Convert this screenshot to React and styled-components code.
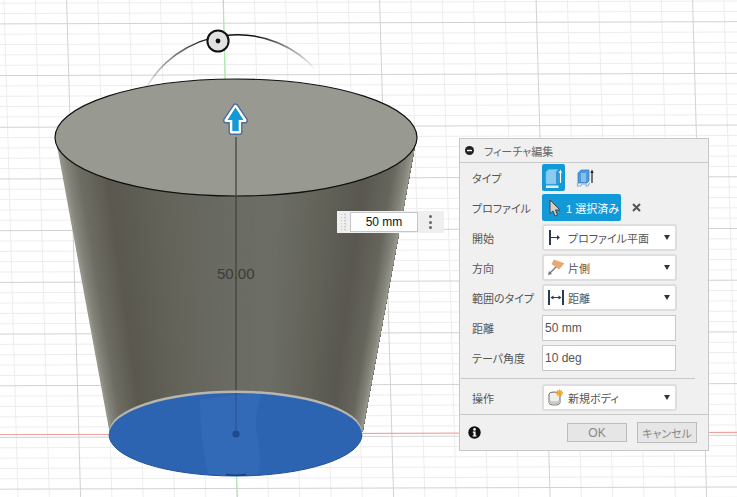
import React from "react";
import styled, { createGlobalStyle } from "styled-components";

const Global = createGlobalStyle`
  html, body { margin: 0; padding: 0; background: #fff; overflow: hidden; }
  body { font-family: "Liberation Sans", "Noto Sans CJK JP", sans-serif; }
`;

const Canvas = styled.div`
  position: relative;
  width: 737px;
  height: 497px;
  overflow: hidden;
  background: #fff;
`;

const Scene = styled.svg`
  position: absolute;
  inset: 0;
  display: block;
`;

const DimLabel = styled.span`
  position: absolute;
  left: 217px;
  top: 265px;
  font-size: 15px;
  line-height: 18px;
  color: #3c3c38;
`;

const MiniBar = styled.div`
  position: absolute;
  left: 337px;
  top: 211px;
  width: 107px;
  height: 22px;
  box-sizing: border-box;
  display: flex;
  align-items: center;
  background: #efefef;
`;

const Grip = styled.div`
  width: 5px;
  height: 18px;
  margin: 0 4px 0 3px;
  background-image: radial-gradient(#c4c4c4 0.7px, transparent 0.8px);
  background-size: 3px 3px;
  border-right: 1px solid #dcdcdc;
`;

const MiniInput = styled.div`
  width: 68px;
  height: 20px;
  box-sizing: border-box;
  border: 1px solid #c6c6c6;
  background: #fff;
  display: flex;
  align-items: center;
  justify-content: center;
  font-size: 12px;
  color: #111;
`;

const MiniDots = styled.div`
  margin-left: 11px;
  display: flex;
  flex-direction: column;
  gap: 2.5px;
`;

const MiniDot = styled.i`
  display: block;
  width: 3px;
  height: 3px;
  border-radius: 50%;
  background: #666;
`;

const Panel = styled.section`
  position: absolute;
  left: 459px;
  top: 138px;
  width: 250px;
  height: 313px;
  box-sizing: border-box;
  border: 1px solid #c8c8c8;
  background: #f0f0f0;
  display: flex;
  flex-direction: column;
  font-family: "Liberation Sans", "Noto Sans CJK JP", sans-serif;
  font-feature-settings: "palt";
  font-size: 11px;
  color: #555;
`;

const Header = styled.header`
  height: 24px;
  box-sizing: border-box;
  flex: none;
  display: flex;
  align-items: center;
  gap: 10px;
  padding-left: 5px;
  border-bottom: 1px solid #c8c8c8;
`;

const Title = styled.h1`
  margin: 0;
  font-size: 11px;
  font-weight: 400;
  color: #666;
`;

const Body = styled.div`
  flex: 1;
  display: flex;
  flex-direction: column;
  padding: 1px 0 0 12px;
`;

const Row = styled.div`
  display: grid;
  grid-template-columns: 70px 1fr;
  align-items: center;
  height: 27px;
  margin-bottom: 3px;
`;

const Label = styled.label`
  color: #555;
  white-space: nowrap;
`;

const Controls = styled.div`
  display: flex;
  align-items: center;
  height: 27px;
`;

const TypeButton = styled.button`
  width: 23px;
  height: 27px;
  padding: 0;
  margin-right: ${(p) => (p.$active ? "8px" : "0")};
  border: none;
  border-radius: 2px;
  background: ${(p) => (p.$active ? "#129ad8" : "transparent")};
  display: flex;
  align-items: center;
  justify-content: center;
`;

const SelectionButton = styled.button`
  width: 79px;
  height: 27px;
  padding: 0 0 0 7px;
  border: none;
  border-radius: 2px;
  background: #129ad8;
  color: #fff;
  font: inherit;
  font-feature-settings: "palt";
  display: flex;
  align-items: center;
  gap: 5px;
  white-space: nowrap;
`;

const ClearButton = styled.button`
  width: 11px;
  height: 11px;
  margin-left: 10px;
  padding: 0;
  border: none;
  background: none;
  display: flex;
`;

const Select = styled.div`
  width: 135px;
  height: 27px;
  box-sizing: border-box;
  border: 2px solid #dedede;
  border-radius: 3px;
  background: #fff;
  display: flex;
  align-items: center;
  padding: 0 5px 0 ${(p) => p.$pad || 1}px;
  color: #555;
`;

const SelectIcon = styled.span`
  width: 21px;
  flex: none;
  display: flex;
  align-items: center;
`;

const SelectText = styled.span`
  flex: 1;
  white-space: nowrap;
`;

const Caret = styled.i`
  width: 0;
  height: 0;
  border-left: 3px solid transparent;
  border-right: 3px solid transparent;
  border-top: 5px solid #333;
`;

const TextInput = styled.div`
  width: 134px;
  height: 26px;
  margin-top: 1px;
  box-sizing: border-box;
  border: 1px solid #c8c8c8;
  background: #fff;
  padding-left: 2px;
  display: flex;
  align-items: center;
  font-size: 12px;
  color: #555;
`;

const Separator = styled.hr`
  width: 234px;
  height: 1px;
  margin: 4px 0 5px -11px;
  border: none;
  background: #c8c8c8;
`;

const Footer = styled.footer`
  height: 36px;
  box-sizing: border-box;
  flex: none;
  border-top: 1px solid #c8c8c8;
  display: flex;
  align-items: center;
  padding: 0 11px 0 8px;
`;

const InfoIcon = styled.svg`
  width: 13px;
  height: 13px;
  margin-right: auto;
`;

const FootButton = styled.button`
  width: 60px;
  height: ${(p) => (p.$tall ? 21 : 19)}px;
  margin-left: 10px;
  padding: 0;
  box-sizing: border-box;
  border: 1px solid #bdbdbd;
  background: #e6e6e6;
  color: #888;
  font: inherit;
  font-feature-settings: "palt";
  font-size: ${(p) => (p.$tall ? 11 : 12)}px;
`;

/* ---------- scene drawing ---------- */

const hexLerp = (a, b, t) => {
  const p = (h) => [1, 3, 5].map((i) => parseInt(h.slice(i, i + 2), 16));
  const [x, y] = [p(a), p(b)];
  return `rgb(${x.map((v, i) => Math.round(v + (y[i] - v) * t)).join(",")})`;
};

const RAMP = [
  [0, "#9a9a90"], [0.015, "#85857b"], [0.05, "#6e6d64"], [0.13, "#5a584f"],
  [0.3, "#64645b"], [0.5, "#6b6c64"], [0.62, "#6c6d65"], [0.75, "#63635a"],
  [0.87, "#595750"], [0.95, "#67665d"], [0.985, "#85857c"], [1, "#9a9a90"],
];

const rampAt = (t) => {
  for (let i = 1; i < RAMP.length; i++) {
    if (t <= RAMP[i][0]) {
      const [t0, c0] = RAMP[i - 1];
      const [t1, c1] = RAMP[i];
      return hexLerp(c0, c1, (t - t0) / (t1 - t0));
    }
  }
  return RAMP[RAMP.length - 1][1];
};

const Strips = () => {
  const n = 140;
  const out = [];
  for (let i = 0; i < n; i++) {
    const a = i / n;
    const xt = 56 + a * 360;
    const xb = 109.5 + a * 253;
    out.push(
      <polygon key={i} points={`${xt},140 416,140 362.5,432 ${xb},432`} fill={rampAt(a + 0.5 / n)} />
    );
  }
  return out;
};

const GridLines = () => {
  const lines = [];
  for (let i = -1; i < 26; i++) {
    const x0 = 4 + i * 31.3;
    const major = (i - 2 + 100) % 5 === 0;
    lines.push({ major, d: `M${x0} 0 L${x0 + 14} 497` });
  }
  for (let i = -1; i < 50; i++) {
    const y0 = 2.8 + i * 10.34;
    const major = (i - 2 + 100) % 5 === 0;
    lines.push({ major, d: `M0 ${y0 + 0.4} L737 ${y0 - 1.8}` });
  }
  return (
    <>
      {lines.filter((l) => !l.major).map((l) => <path key={l.d} d={l.d} stroke="#ededed" strokeWidth="1" fill="none" />)}
      {lines.filter((l) => l.major).map((l) => <path key={l.d} d={l.d} stroke="#d2d2d2" strokeWidth="1" fill="none" />)}
    </>
  );
};

const SceneDrawing = () => (
  <Scene width="737" height="497" viewBox="0 0 737 497">
    <defs>
      <linearGradient id="arcFade" gradientUnits="userSpaceOnUse" x1="142" y1="0" x2="316" y2="0">
        <stop offset="0" stopColor="#222" stopOpacity="0" />
        <stop offset="0.2" stopColor="#333" stopOpacity="0.7" />
        <stop offset="0.4" stopColor="#111" />
        <stop offset="0.65" stopColor="#111" />
        <stop offset="0.85" stopColor="#444" stopOpacity="0.6" />
        <stop offset="1" stopColor="#444" stopOpacity="0" />
      </linearGradient>
    </defs>
    <GridLines />
    <path d="M223.4 0 L225 80" stroke="#a4eea4" strokeWidth="1" />
    <path d="M236.6 476 L237.4 497" stroke="#a4eea4" strokeWidth="1" />
    <path d="M0 434.6 L110 434.4" stroke="#eea0a0" strokeWidth="1" />
    <path d="M362 433.4 L737 432.3" stroke="#ef9090" strokeWidth="1" />
    <path d="M145 90 A 105 105 0 0 1 316 70" fill="none" stroke="url(#arcFade)" strokeWidth="1.6" />
    <Strips />
    <ellipse cx="236" cy="137.5" rx="181" ry="58.5" fill="#989990" stroke="#111" strokeWidth="1.2" />
    <path d="M236 137 V392" stroke="#3f403c" strokeWidth="1.2" />
    <ellipse cx="235.5" cy="432" rx="126.5" ry="41.5" fill="#b9b6ae" />
    <ellipse cx="235.5" cy="434.5" rx="126.5" ry="41.5" fill="#2c64b2" />
    <path d="M200 400 Q232 394 262 394 Q252 420 258 440 Q262 460 258 475 Q230 477 208 474 Q200 440 200 400Z" fill="#3a72be" opacity="0.45" />
    <path d="M109 434.5 A 126.5 41.5 0 0 0 362 434.5" fill="none" stroke="#1f4f9c" strokeWidth="1" />
    <path d="M226 474.6 Q236 476 246 474.6" fill="none" stroke="#173f80" strokeWidth="1.5" />
    <path d="M236 393 V430" stroke="#2a5490" strokeWidth="1.2" />
    <circle cx="236" cy="434" r="3.6" fill="#1f4a8e" />
    <circle cx="218" cy="41" r="10.6" fill="#e2e2e2" stroke="#111" strokeWidth="2" />
    <circle cx="218" cy="41" r="2.4" fill="#111" />
    <path d="M235.5 106.5 L245 120.5 H239.5 V132 H231.5 V120.5 H226 Z" fill="#129ad8" stroke="#4c6c9c" strokeWidth="6" strokeLinejoin="round" />
    <path d="M235.5 106.5 L245 120.5 H239.5 V132 H231.5 V120.5 H226 Z" fill="#129ad8" stroke="#fff" strokeWidth="3.2" strokeLinejoin="round" />
    <path d="M235.5 107.5 L243.5 120 H238.7 V131 H232.3 V120 H227.5 Z" fill="#129ad8" />
  </Scene>
);

/* ---------- panel icons ---------- */

const ExtrudeSolid = () => (
  <svg width="17" height="20" viewBox="0 0 17 20">
    <path d="M1 4 L3.5 1.5 H13 V14 L11 16 H1 Z" fill="#8ccbf0" stroke="#6fb8e6" strokeWidth="0.6" />
    <path d="M11 4 L13 1.5 V14 L11 16 Z" fill="#3d8fd0" />
    <path d="M1 17.5 H13.5 V20 H1 Z" fill="#dff0fa" />
    <path d="M15.5 3 V15" stroke="#fff" strokeWidth="1.2" />
    <path d="M13.8 5 L15.5 1.5 L17 5 Z" fill="#fff" />
  </svg>
);

const ExtrudeThin = () => (
  <svg width="18" height="20" viewBox="0 0 18 20">
    <path d="M2 5 L5 2 H13 V13 L11 15 H2 Z" fill="#4f9ade" stroke="#2f78c0" strokeWidth="0.7" />
    <path d="M5 5 H10 V14 H5 Z" fill="#88bfeb" />
    <path d="M1.5 15 V18 H4.5 L6 16 H10 V18 H12 L13.5 15" fill="none" stroke="#8fb0d0" strokeWidth="1.2" />
    <path d="M16 3 V15" stroke="#222" strokeWidth="1.2" />
    <path d="M14.3 5 L16 1.5 L17.7 5 Z" fill="#222" />
  </svg>
);

const CursorIcon = () => (
  <svg width="12" height="18" viewBox="0 0 12 18">
    <path d="M1 1 L1 14.5 L4 12 L6 17 L8.5 16 L6.5 11 L11 11 Z" fill="#cfcfcf" stroke="#444" strokeWidth="1" strokeLinejoin="round" />
  </svg>
);

const CloseIcon = () => (
  <svg width="11" height="11" viewBox="0 0 11 11">
    <path d="M2 2 L9 9 M9 2 L2 9" stroke="#555" strokeWidth="2" />
  </svg>
);

const StartIcon = () => (
  <svg width="14" height="17" viewBox="0 0 14 17">
    <path d="M3 1 V16" stroke="#2a3a55" strokeWidth="2" />
    <path d="M4 8.5 H11" stroke="#2a3a55" strokeWidth="1" />
    <path d="M10 6 L13 8.5 L10 11 Z" fill="#2a3a55" />
  </svg>
);

const DirectionIcon = () => (
  <svg width="18" height="17" viewBox="0 0 18 17">
    <path d="M7 1 L17 4.5 L12 10 L5 5 Z" fill="#eaa873" stroke="#d98d55" strokeWidth="0.5" />
    <path d="M9 8 L2 15" stroke="#777" strokeWidth="1.2" />
    <path d="M1 16 L2 12 L5 15 Z" fill="#777" />
  </svg>
);

const DistanceIcon = () => (
  <svg width="18" height="17" viewBox="0 0 18 17">
    <path d="M2 1 V16 M16 1 V16" stroke="#2a3a55" strokeWidth="2" />
    <path d="M4 8.5 H14" stroke="#2a3a55" strokeWidth="1" />
    <path d="M6.5 6.5 L3.5 8.5 L6.5 10.5 Z M11.5 6.5 L14.5 8.5 L11.5 10.5 Z" fill="#2a3a55" />
  </svg>
);

const BodyIcon = () => (
  <svg width="18" height="17" viewBox="0 0 18 17">
    <path d="M2 5 Q2 3 7 3 Q13 3 13 5 V13.5 Q13 16 7.5 16 Q2 16 2 13.5 Z" fill="#eeeeea" stroke="#666" strokeWidth="1" />
    <path d="M2.5 11 Q7 14 12.5 11 V13.5 Q12 15.5 7.5 15.5 Q3 15.5 2.5 13.5 Z" fill="#c9c9c4" />
    <path d="M12.5 0.5 V7.5 M9 4 H16 M10 1.5 L15 6.5 M15 1.5 L10 6.5" stroke="#f5a81c" strokeWidth="1.4" />
  </svg>
);

const Choice = ({ icon, text }) => (
  <Select $pad={3}>
    <SelectIcon>{icon}</SelectIcon>
    <SelectText>{text}</SelectText>
    <Caret />
  </Select>
);

export default function App() {
  return (
    <Canvas>
      <Global />
      <SceneDrawing />
      <DimLabel>50.00</DimLabel>

      <MiniBar>
        <Grip />
        <MiniInput>50 mm</MiniInput>
        <MiniDots><MiniDot /><MiniDot /><MiniDot /></MiniDots>
      </MiniBar>

      <Panel>
        <Header>
          <svg width="9" height="9" viewBox="0 0 9 9">
            <circle cx="4.5" cy="4.5" r="4.5" fill="#222" />
            <path d="M2 4.5 H7" stroke="#fff" strokeWidth="1.4" />
          </svg>
          <Title>フィーチャ編集</Title>
        </Header>
        <Body>
          <Row>
            <Label>タイプ</Label>
            <Controls>
              <TypeButton $active><ExtrudeSolid /></TypeButton>
              <TypeButton><ExtrudeThin /></TypeButton>
            </Controls>
          </Row>
          <Row>
            <Label>プロファイル</Label>
            <Controls>
              <SelectionButton><CursorIcon />1 選択済み</SelectionButton>
              <ClearButton><CloseIcon /></ClearButton>
            </Controls>
          </Row>
          <Row>
            <Label>開始</Label>
            <Choice icon={<StartIcon />} text="プロファイル平面" />
          </Row>
          <Row>
            <Label>方向</Label>
            <Choice icon={<DirectionIcon />} text="片側" />
          </Row>
          <Row>
            <Label>範囲のタイプ</Label>
            <Choice icon={<DistanceIcon />} text="距離" />
          </Row>
          <Row>
            <Label>距離</Label>
            <TextInput>50 mm</TextInput>
          </Row>
          <Row>
            <Label>テーパ角度</Label>
            <TextInput>10 deg</TextInput>
          </Row>
          <Separator />
          <Row>
            <Label>操作</Label>
            <Choice icon={<BodyIcon />} text="新規ボディ" />
          </Row>
        </Body>
        <Footer>
          <InfoIcon viewBox="0 0 13 13">
            <circle cx="6.5" cy="6.5" r="6.2" fill="#111" />
            <circle cx="6.5" cy="3.4" r="1.3" fill="#fff" />
            <path d="M4.8 5.6 H7.6 V9.4 H8.6 V10.6 H4.6 V9.4 H5.6 V6.8 H4.8 Z" fill="#fff" />
          </InfoIcon>
          <FootButton>OK</FootButton>
          <FootButton $tall>キャンセル</FootButton>
        </Footer>
      </Panel>
    </Canvas>
  );
}
